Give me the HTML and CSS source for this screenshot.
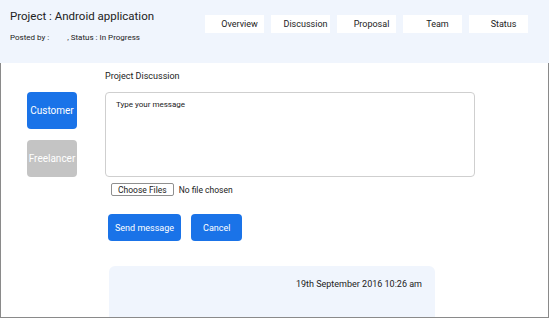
FILE: index.html
```html
<!DOCTYPE html>
<html lang="en">
<head>
  <meta charset="UTF-8">
  <meta name="viewport" content="width=device-width, initial-scale=1.0">
  <title>Project Discussion</title>
  <link rel="stylesheet" href="styles.css">
</head>
<body>

<div class="header">
  <div class="project-info">
    <h1 class="project-title">Project : Android application</h1>
    <div class="project-meta">Posted by : <span class="poster"></span>, Status : In Progress</div>
  </div>
  <div class="tabs">
    <div class="tab">Overview</div>
    <div class="tab">Discussion</div>
    <div class="tab">Proposal</div>
    <div class="tab">Team</div>
    <div class="tab">Status</div>
  </div>
</div>

<div class="main">
  <div class="sidebar">
    <button class="role role-active">Customer</button>
    <button class="role role-inactive">Freelancer</button>
  </div>
  <div class="discussion">
    <div class="section-label">Project Discussion</div>
    <textarea class="message-box" placeholder="Type your message"></textarea>
    <div class="file-row"><input type="file" multiple></div>
    <div class="actions">
      <button class="action">Send message</button>
      <button class="action">Cancel</button>
    </div>
    <div class="message-card">
      <div class="message-date">19th September 2016 10:26 am</div>
    </div>
  </div>
</div>

</body>
</html>
```

FILE: styles.css
```css
body { font-family: Roboto, "Liberation Sans", Arial, sans-serif; margin: 0; background-color: white; color: #222; height: 319px; overflow: hidden; }
.header { height: 63px; box-sizing: border-box; background-color: #f0f5fd; display: flex; justify-content: space-between; padding: 9px 21px 0 10px; }
.project-title { font-size: 11.5px; font-weight: normal; line-height: 14px; margin: 0; }
.project-meta { font-size: 8px; line-height: 10px; margin-top: 10px; }
.poster { display: inline-block; width: 16px; }
.tabs { display: flex; gap: 7px; margin-top: 6px; }
.tab { width: 59px; height: 18px; box-sizing: border-box; background-color: white; font-size: 9px; line-height: 18px; text-align: center; padding-left: 10px; }
.main { height: 255px; box-sizing: border-box; border: 1px solid #8a8a8a; border-top: none; display: flex; overflow: hidden; }
.sidebar { width: 104px; flex-shrink: 0; box-sizing: border-box; padding: 29px 0 0 26px; display: flex; flex-direction: column; gap: 11px; }
.role { width: 50px; height: 37px; flex-shrink: 0; border: none; border-radius: 4px; color: white; font-family: inherit; font-size: 10px; padding: 0; }
.role-active { background-color: #1a73e8; }
.role-inactive { background-color: #c4c4c4; }
.discussion { flex: 1; padding-top: 6px; display: flex; flex-direction: column; align-items: flex-start; }
.discussion > * { flex-shrink: 0; }
.section-label { font-size: 9px; line-height: 14px; margin-bottom: 9px; }
.message-box { width: 370px; height: 85px; box-sizing: border-box; border: 1px solid #cfcfcf; border-radius: 4px; padding: 7px 10px; font-family: inherit; font-size: 8px; resize: none; }
.message-box::placeholder { color: #222; }
.file-row { margin: 6px 0 0 6px; height: 13px; }
.file-row input { display: block; height: 13px; line-height: 13px; font-family: inherit; font-size: 8.5px; color: #222; }
.file-row input::file-selector-button { font-family: inherit; font-size: 8.5px; height: 13px; padding: 0 6px; margin-right: 5px; background-color: white; border: 1px solid #8f8f8f; border-radius: 2px; color: #222; }
.actions { display: flex; gap: 10px; margin: 18px 0 0 3px; }
.action { height: 27px; border: none; border-radius: 4px; background-color: #1a73e8; color: white; font-family: inherit; font-size: 9px; padding: 0 7px; }
.action:last-child { padding: 0 12px; }
.message-card { width: 326px; height: 70px; box-sizing: border-box; margin: 25px 0 0 4px; background-color: #f0f5fd; border-radius: 6px; padding: 13px 13px 0 0; text-align: right; }
.message-date { font-size: 9px; line-height: 10px; }
```
